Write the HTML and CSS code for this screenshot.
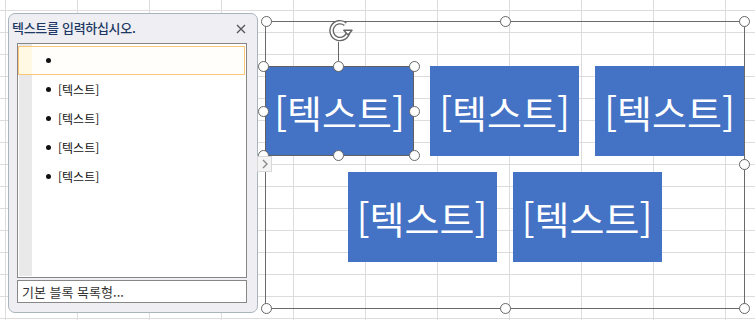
FILE: index.html
```html
<!DOCTYPE html>
<html lang="ko">
<head>
<meta charset="utf-8">
<title>SmartArt 텍스트 창</title>
<link rel="stylesheet" href="styles.css">
</head>
<body>
<div class="sheet">
  <aside class="pane">
    <div class="pane-head">
      <span class="pane-title">텍스트를 입력하십시오.</span>
      <span class="pane-close">
        <svg width="10" height="10" viewBox="0 0 10 10"><path d="M1 1 L9 9 M9 1 L1 9" stroke="#555" stroke-width="1.3" fill="none"/></svg>
      </span>
    </div>
    <div class="outline">
      <ul class="items">
        <li class="item is-active"><span class="dot"></span></li>
        <li class="item"><span class="dot"></span>[텍스트]</li>
        <li class="item"><span class="dot"></span>[텍스트]</li>
        <li class="item"><span class="dot"></span>[텍스트]</li>
        <li class="item"><span class="dot"></span>[텍스트]</li>
      </ul>
    </div>
    <div class="layout-name">기본 블록 목록형...</div>
  </aside>

  <div class="smartart">
    <div class="block is-selected">
      <span class="block-text">[텍스트]</span>
      <span class="rot-line"></span>
      <span class="rot-icon">
        <svg width="26" height="26" viewBox="0 0 26 26">
          <path d="M18.4 6.2 A8.4 8.4 0 1 0 21.3 13.8" stroke="#666" stroke-width="4.6" fill="none"/>
          <path d="M18.4 6.2 A8.4 8.4 0 1 0 21.3 13.8" stroke="#fff" stroke-width="1.9" fill="none"/>
          <path d="M16.8 12.2 L25 12.2 L21 17 Z" stroke="#666" stroke-width="1.4" fill="#fff" stroke-linejoin="round"/>
        </svg>
      </span>
      <span class="handle h-tl"></span><span class="handle h-tc"></span><span class="handle h-tr"></span>
      <span class="handle h-ml"></span><span class="handle h-mr"></span>
      <span class="handle h-bl"></span><span class="handle h-bc"></span><span class="handle h-br"></span>
    </div>
    <div class="block"><span class="block-text">[텍스트]</span></div>
    <div class="block"><span class="block-text">[텍스트]</span></div>
    <div class="block"><span class="block-text">[텍스트]</span></div>
    <div class="block"><span class="block-text">[텍스트]</span></div>

    <span class="handle f-tl"></span><span class="handle f-tc"></span><span class="handle f-tr"></span>
    <span class="handle f-ml"></span><span class="handle f-mr"></span>
    <span class="handle f-bl"></span><span class="handle f-bc"></span><span class="handle f-br"></span>
  </div>

  <span class="pane-toggle">
    <svg width="8" height="10" viewBox="0 0 8 10"><path d="M2 1 L6 5 L2 9" stroke="#8a8a8a" stroke-width="1.4" fill="none"/></svg>
  </span>
</div>
</body>
</html>
```

FILE: styles.css
```css
* { box-sizing: border-box; }

html, body {
  margin: 0;
  padding: 0;
  background: #fff;
}

body {
  font-family: "Noto Sans CJK KR", "Noto Sans", sans-serif;
}

.sheet {
  position: relative;
  width: 755px;
  height: 320px;
  overflow: hidden;
  display: flex;
  align-items: flex-start;
  background-color: #fff;
  background-image:
    linear-gradient(to right, #dcdcdc 1px, transparent 1px),
    linear-gradient(to bottom, #dcdcdc 1px, transparent 1px);
  background-size: 72px 22px;
  background-position: 5px 10px;
}

/* ---------- text pane ---------- */
.pane {
  margin: 13px 0 0 8px;
  width: 250px;
  height: 300px;
  flex: none;
  background: #eeeef3;
  border: 1px solid #a9b5bc;
  border-radius: 7px;
  display: flex;
  flex-direction: column;
  padding: 0 10px 9px 8px;
}

.pane-head {
  height: 29px;
  display: flex;
  align-items: center;
  justify-content: space-between;
  padding: 0 1px 1px 0;
  margin-left: -5px;
}

.pane-title {
  font-size: 13px;
  font-weight: 500;
  color: #1e3963;
  letter-spacing: -0.3px;
}

.pane-close {
  display: flex;
  width: 10px;
  height: 10px;
  margin-top: 3px;
}

.outline {
  height: 236px;
  border: 1px solid #878787;
  background-color: #fff;
  background-image: linear-gradient(to right, #fff 0 1px, #e9e9e9 1px 14px, #fff 14px);
  background-repeat: no-repeat;
  background-size: 100% calc(100% - 1px);
  padding: 2px 1px 1px 0;
}

.items {
  list-style: none;
  margin: 0;
  padding: 0;
}

.item {
  height: 29px;
  display: flex;
  align-items: center;
  padding-left: 28px;
  font-size: 12px;
  color: #111;
}

.item.is-active {
  border: 1px solid #fbc776;
  background: linear-gradient(to right, #fff9e3 0 13px, #fffefb 13px);
  padding-left: 27px;
}

.dot {
  width: 5px;
  height: 5px;
  border-radius: 50%;
  background: #111;
  margin-right: 7px;
  flex: none;
}

.layout-name {
  margin-top: 2px;
  height: 23px;
  border: 1px solid #878787;
  background: #fff;
  font-size: 13px;
  color: #333;
  padding-left: 4px;
  display: flex;
  align-items: center;
}

/* ---------- smartart ---------- */
.smartart {
  position: relative;
  margin: 21px 0 0 7px;
  width: 479px;
  height: 287px;
  flex: none;
  display: flex;
  flex-wrap: wrap;
  justify-content: center;
  align-content: flex-start;
  gap: 16px;
  padding-top: 45px;
}

.smartart::before {
  content: "";
  position: absolute;
  left: 0;
  top: 0;
  right: -1px;
  bottom: -1px;
  border: 1px solid #6a6a6a;
  pointer-events: none;
}

.block {
  position: relative;
  width: 149px;
  height: 90px;
  background: #4472c4;
  display: flex;
  align-items: center;
  justify-content: center;
}

.block.is-selected {
  outline: 1px solid #606060;
  outline-offset: -1px;
}

.block-text {
  color: #fff;
  font-size: 38px;
  font-weight: 400;
  line-height: 1;
  white-space: nowrap;
  margin-top: 1px;
}

.handle {
  position: absolute;
  width: 11px;
  height: 11px;
  border-radius: 50%;
  background: #fff;
  border: 1.6px solid #666;
  z-index: 2;
}

/* shape handles (relative to block) */
.h-tl { left: -7px; top: -5px; }
.h-tc { left: 68px; top: -5px; }
.h-tr { left: 144px; top: -5px; }
.h-ml { left: -7px; top: 40px; }
.h-mr { left: 144px; top: 40px; }
.h-bl { left: -7px; top: 84px; }
.h-bc { left: 68px; top: 84px; }
.h-br { left: 144px; top: 84px; }

.rot-line {
  position: absolute;
  left: 73px;
  top: -24px;
  width: 1px;
  height: 19px;
  background: #666;
}

.rot-icon {
  position: absolute;
  left: 62px;
  top: -48px;
  width: 26px;
  height: 26px;
  display: flex;
}

/* frame handles (relative to smartart) */
.f-tl { left: -4px; top: -5px; }
.f-tc { left: 235px; top: -5px; }
.f-tr { left: 474px; top: -5px; }
.f-ml { left: -4px; top: 138px; }
.f-mr { left: 474px; top: 138px; }
.f-bl { left: -4px; top: 282px; }
.f-bc { left: 235px; top: 282px; }
.f-br { left: 474px; top: 282px; }

.pane-toggle {
  position: absolute;
  left: 257px;
  top: 156px;
  width: 15px;
  height: 16px;
  background: #f4f4f4;
  border: 1px solid #d8d8d8;
  display: flex;
  align-items: center;
  justify-content: center;
  z-index: 3;
}
```
